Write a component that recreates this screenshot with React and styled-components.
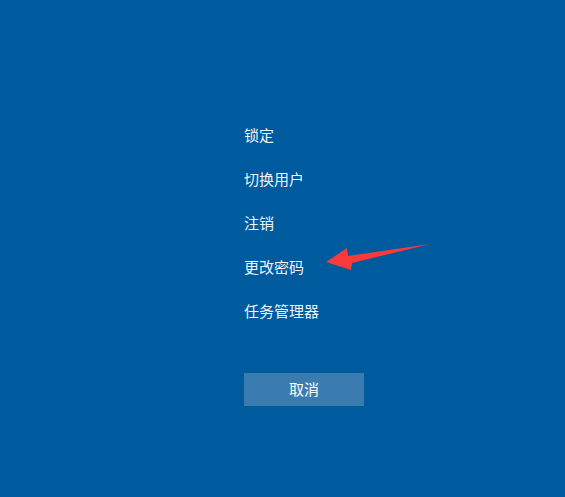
import React from "react";
import styled, { createGlobalStyle } from "styled-components";

const GlobalStyle = createGlobalStyle`
  html, body {
    margin: 0;
    padding: 0;
    background: #005a9e;
  }
`;

const Screen = styled.div`
  position: relative;
  width: 565px;
  height: 497px;
  background: #005a9e;
  font-family: "Noto Sans CJK SC", "Noto Sans", sans-serif;
  color: #eef3f8;
  overflow: hidden;
`;

const Menu = styled.div`
  display: flex;
  flex-direction: column;
  padding: 113px 0 0 244px;
`;

const Option = styled.div`
  height: 44px;
  line-height: 44px;
  font-size: 15px;
  cursor: pointer;
`;

const CancelButton = styled.button`
  margin-top: 40px;
  width: 120px;
  height: 33px;
  border: none;
  background: #3a7bb0;
  color: #ffffff;
  font-family: inherit;
  font-size: 15px;
  padding: 0 0 2px;
  cursor: pointer;
`;

const Arrow = styled.svg`
  position: absolute;
  left: 0;
  top: 0;
  pointer-events: none;
`;

const items = ["锁定", "切换用户", "注销", "更改密码", "任务管理器"];

export default function App() {
  return (
    <Screen>
      <GlobalStyle />
      <Menu>
        {items.map(label => (
          <Option key={label}>{label}</Option>
        ))}
        <CancelButton>取消</CancelButton>
      </Menu>
      {/* annotation arrow */}
      <Arrow width="565" height="497" viewBox="0 0 565 497">
        <polygon
          points="326,262 347,248 348,256 430,244 352,263 351,270"
          fill="#fa3a3a"
        />
      </Arrow>
    </Screen>
  );
}
